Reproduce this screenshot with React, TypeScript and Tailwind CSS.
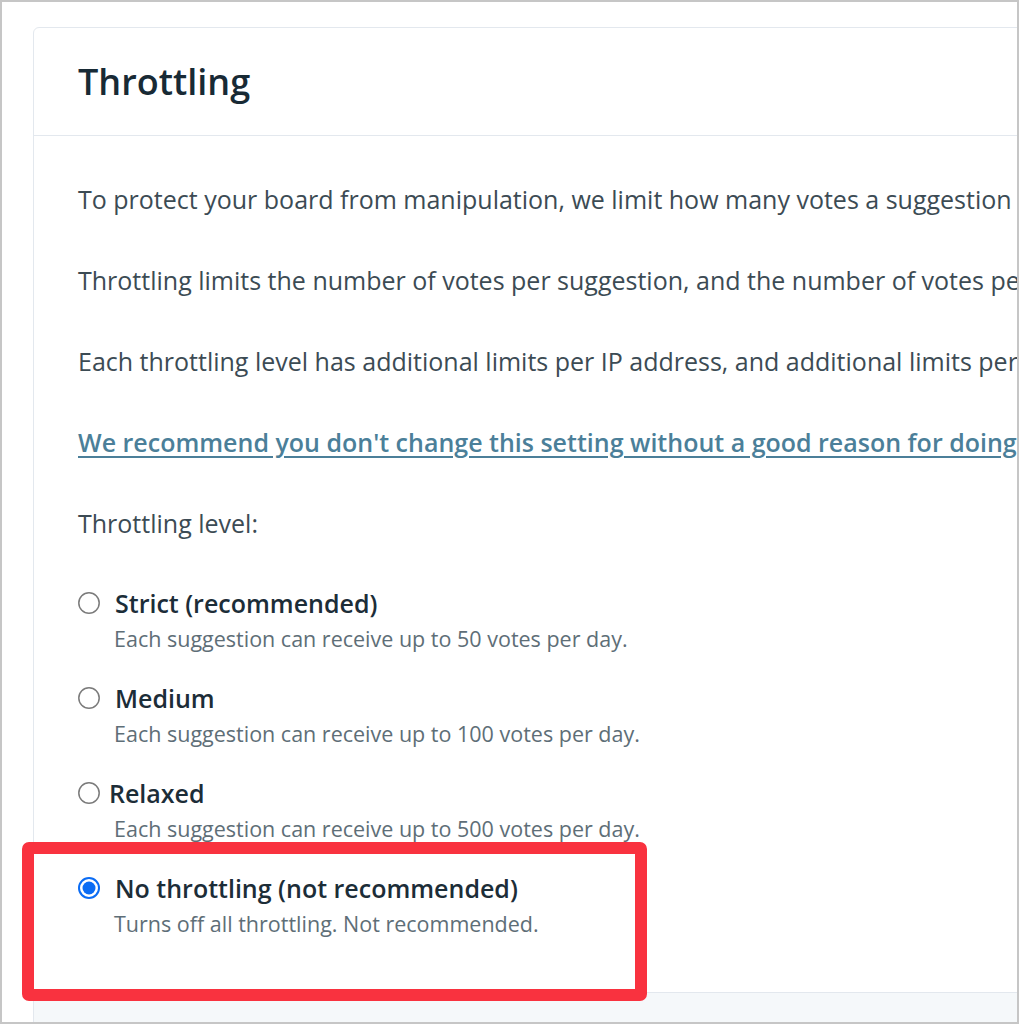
const OPTIONS = [
  {
    label: "Strict (recommended)",
    description: "Each suggestion can receive up to 50 votes per day.",
    gap: "gap-[15px]",
    checked: false,
  },
  {
    label: "Medium",
    description: "Each suggestion can receive up to 100 votes per day.",
    gap: "gap-[15px]",
    checked: false,
  },
  {
    label: "Relaxed",
    description: "Each suggestion can receive up to 500 votes per day.",
    gap: "gap-[9px]",
    checked: false,
  },
  {
    label: "No throttling (not recommended)",
    description: "Turns off all throttling. Not recommended.",
    gap: "gap-[15px]",
    checked: true,
  },
];

function Radio({ checked }: { checked: boolean }) {
  if (checked) {
    return (
      <svg width="22" height="22" viewBox="0 0 22 22" aria-hidden="true">
        <circle cx="11" cy="11" r="10" fill="#ffffff" stroke="#0b6cf4" strokeWidth="2" />
        <circle cx="11" cy="11" r="6.5" fill="#0b6cf4" />
      </svg>
    );
  }
  return (
    <svg width="22" height="22" viewBox="0 0 22 22" aria-hidden="true">
      <circle cx="11" cy="11" r="10.2" fill="#ffffff" stroke="#7b7b7b" strokeWidth="1.5" />
    </svg>
  );
}

export default function App() {
  return (
    <div className="relative h-[1024px] w-[1019px] overflow-hidden border-2 border-[#c6c6c6] bg-white font-['Open_Sans',sans-serif]">
      <div className="ml-[31px] mt-[25px] w-[1100px] rounded-md border border-[#e3e8ee] bg-white">
        <div className="flex h-[108px] items-center border-b border-[#e3e8ee] px-[44px]">
          <h1 className="text-[36px] font-semibold text-[#182a35]">Throttling</h1>
        </div>

        <div className="whitespace-nowrap px-[44px] pb-[49px] pt-[45px]">
          <div className="flex flex-col gap-[45px] text-[25px] leading-[36px] text-[#3c4b54]">
            <p>
              To protect your board from manipulation, we limit how many votes a suggestion can receive.
            </p>
            <p>
              Throttling limits the number of votes per suggestion, and the number of votes per user.
            </p>
            <p>
              Each throttling level has additional limits per IP address, and additional limits per user.
            </p>
            <p>
              <a href="#" className="font-semibold text-[#4b7f99] underline underline-offset-4">
                We recommend you don't change this setting without a good reason for doing so.
              </a>
            </p>
            <p>Throttling level:</p>
          </div>

          <div className="mt-[45px] flex flex-col gap-[23px]">
            {OPTIONS.map((option) => (
              <div key={option.label} className="flex flex-col">
                <div className={`flex h-[34px] items-center ${option.gap}`}>
                  <Radio checked={option.checked} />
                  <span className="text-[25px] font-semibold leading-[34px] text-[#1c2d38]">
                    {option.label}
                  </span>
                </div>
                <p className="pl-[36px] text-[21.5px] leading-[38px] text-[#5e6e77]">
                  {option.description}
                </p>
              </div>
            ))}
          </div>
        </div>

        <div className="h-[80px] border-t border-[#e3e8ee] bg-[#f5f8fa]" />
      </div>

      <div className="absolute left-[20px] top-[840px] h-[159px] w-[625px] rounded-[7px] border-[12px] border-[#f9323f]" />
    </div>
  );
}
